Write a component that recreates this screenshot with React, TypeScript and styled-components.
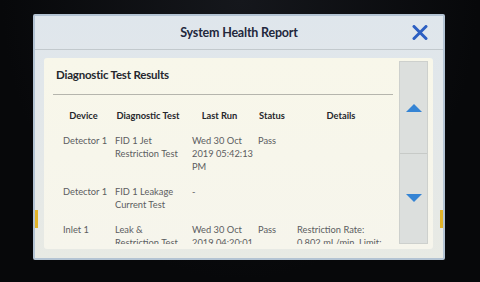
import React from 'react'
import styled, { createGlobalStyle } from 'styled-components'

const GlobalStyle = createGlobalStyle`
  html, body {
    margin: 0;
    padding: 0;
    background: #0a0b0e;
  }
  body {
    width: 480px;
    height: 282px;
    overflow: hidden;
    font-family: Lato, 'Liberation Sans', sans-serif;
  }
`

const Bezel = styled.div`
  width: 480px;
  height: 282px;
  padding: 14px 0 0 33px;
  box-sizing: border-box;
  background: radial-gradient(ellipse at 50% 0%, #15171c 0%, #07080a 70%);
`

const Screen = styled.div`
  position: relative;
  width: 412px;
  height: 246px;
  box-sizing: border-box;
  border: 2px solid #b3c3d3;
  border-radius: 2px;
  background: linear-gradient(180deg, #dfe6ec 0%, #e4e8e8 60%, #e8eae4 100%);
  display: flex;
  flex-direction: column;
`

const SideMark = styled.div<{ side: 'left' | 'right' }>`
  position: absolute;
  top: 194px;
  ${({ side }) => (side === 'left' ? 'left: 0;' : 'right: 0;')}
  width: 3px;
  height: 18px;
  background: #e2b42a;
`

const Header = styled.div`
  position: relative;
  height: 33px;
  flex: none;
  display: flex;
  align-items: center;
  justify-content: center;
  border-bottom: 1px solid #c2c9cd;
`

const Title = styled.h1`
  margin: 0;
  font-size: 12.5px;
  font-weight: 700;
  color: #23283c;
  letter-spacing: -0.2px;
`

const CloseButton = styled.button`
  position: absolute;
  right: 15px;
  top: 9px;
  width: 16px;
  height: 16px;
  padding: 0;
  border: none;
  background: none;
  display: flex;
`

const Body = styled.div`
  flex: 1;
  padding: 8px 10px 9px 9px;
  display: flex;
  min-height: 0;
`

const Panel = styled.div`
  flex: 1;
  background: linear-gradient(180deg, #f8f7ea 0%, #f6f5ec 100%);
  border-radius: 3px;
  padding: 3px 5px 5px 9px;
  display: flex;
  gap: 6px;
  min-height: 0;
`

const Content = styled.div`
  flex: 1;
  overflow: hidden;
`

const SectionTitle = styled.h2`
  margin: 0;
  padding: 6px 0 11px 3px;
  font-size: 11.5px;
  line-height: 16px;
  font-weight: 700;
  color: #25272e;
  letter-spacing: -0.2px;
  border-bottom: 1px solid #b5b5ad;
`

const Table = styled.div`
  display: flex;
  flex-direction: column;
  gap: 12px;
  padding: 14px 0 0 10px;
`

const Row = styled.div`
  display: grid;
  grid-template-columns: 41px 66px 55px 28px 88px;
  column-gap: 11px;
  font-size: 9.3px;
  line-height: 13px;
`

const HeadCell = styled.div`
  text-align: center;
  font-weight: 700;
  color: #26272c;
  white-space: nowrap;
`

const Cell = styled.div`
  color: #5c5d5f;
  white-space: nowrap;
`

const Line = styled.div`
  display: block;
`

const ScrollBar = styled.div`
  width: 29px;
  flex: none;
  display: flex;
  flex-direction: column;
  background: #dcdfdd;
  border: 1px solid #cdd0cd;
  box-sizing: border-box;
`

const ScrollButton = styled.div<{ down?: boolean }>`
  flex: 1;
  display: flex;
  justify-content: center;
  padding-top: ${({ down }) => (down ? '40px' : '42px')};
  box-sizing: border-box;
  ${({ down }) => (down ? 'border-top: 1px solid #c7cac7;' : '')}
`

const Arrow = ({ down }: { down?: boolean }) => (
  <svg width='16' height='8' viewBox='0 0 16 8'>
    {down ? (
      <polygon points='0,0 16,0 8,8' fill='#3584d4' />
    ) : (
      <polygon points='0,8 16,8 8,0' fill='#3584d4' />
    )}
  </svg>
)

const rows = [
  {
    device: ['Detector 1'],
    test: ['FID 1 Jet', 'Restriction Test'],
    run: ['Wed 30 Oct', '2019 05:42:13', 'PM'],
    status: ['Pass'],
    details: []
  },
  {
    device: ['Detector 1'],
    test: ['FID 1 Leakage', 'Current Test'],
    run: ['-'],
    status: [],
    details: []
  },
  {
    device: ['Inlet 1'],
    test: ['Leak &', 'Restriction Test'],
    run: ['Wed 30 Oct', '2019 04:20:01', 'PM'],
    status: ['Pass'],
    details: ['Restriction Rate:', '0.802 mL/min, Limit:', '5.000 mL/min']
  }
]

const Lines = ({ items }: { items: string[] }) => (
  <Cell>
    {items.map((t, i) => (
      <Line key={i}>{t}</Line>
    ))}
  </Cell>
)

export default function App() {
  return (
    <>
      <GlobalStyle />
      <Bezel>
        <Screen>
          <SideMark side='left' />
          <SideMark side='right' />
          <Header>
            <Title>System Health Report</Title>
            <CloseButton aria-label='Close'>
              <svg width='16' height='15' viewBox='0 0 16 15'>
                <path d='M2 1.5 L14 13.5 M14 1.5 L2 13.5' stroke='#2c5fc2' strokeWidth='3' strokeLinecap='round' />
              </svg>
            </CloseButton>
          </Header>
          <Body>
            <Panel>
              <Content>
                <SectionTitle>Diagnostic Test Results</SectionTitle>
                <Table>
                  <Row>
                    <HeadCell>Device</HeadCell>
                    <HeadCell>Diagnostic Test</HeadCell>
                    <HeadCell>Last Run</HeadCell>
                    <HeadCell>Status</HeadCell>
                    <HeadCell>Details</HeadCell>
                  </Row>
                  {rows.map((r, i) => (
                    <Row key={i}>
                      <Lines items={r.device} />
                      <Lines items={r.test} />
                      <Lines items={r.run} />
                      <Lines items={r.status} />
                      <Lines items={r.details} />
                    </Row>
                  ))}
                </Table>
              </Content>
              <ScrollBar>
                <ScrollButton>
                  <Arrow />
                </ScrollButton>
                <ScrollButton down>
                  <Arrow down />
                </ScrollButton>
              </ScrollBar>
            </Panel>
          </Body>
        </Screen>
      </Bezel>
    </>
  )
}
